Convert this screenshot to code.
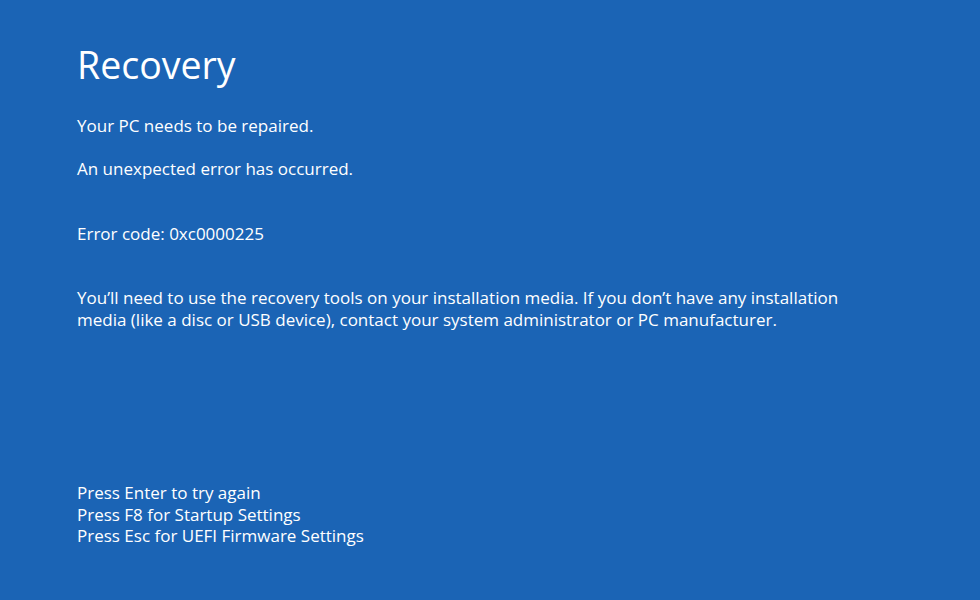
import React from "react";

const App = () => {
    return (
        <div
            className="w-[980px] h-[600px] bg-[#1b64b5] text-white overflow-hidden"
            style={{ fontFamily: '"Open Sans", "Noto Sans", sans-serif' }}
        >
            <div className="pl-[77px] pt-[41px]">
                {/* Title */}
                <h1 className="text-[37.5px] leading-[48px] font-normal">Recovery</h1>

                <p className="mt-[26px] text-[17px] leading-[21px]">Your PC needs to be repaired.</p>
                <p className="mt-[22px] text-[17px] leading-[21px]">An unexpected error has occurred.</p>

                <p className="mt-[44px] text-[17px] leading-[21px]">Error code: 0xc0000225</p>

                <p className="mt-[43px] w-[800px] text-[17px] leading-[22px]">
                    You’ll need to use the recovery tools on your installation media. If you don’t have any installation
                    media (like a disc or USB device), contact your system administrator or PC manufacturer.
                </p>

                {/* Key options */}
                <div className="mt-[151px] text-[17px] leading-[21.5px]">
                    <p>Press Enter to try again</p>
                    <p>Press F8 for Startup Settings</p>
                    <p>Press Esc for UEFI Firmware Settings</p>
                </div>
            </div>
        </div>
    );
};

export default App;
